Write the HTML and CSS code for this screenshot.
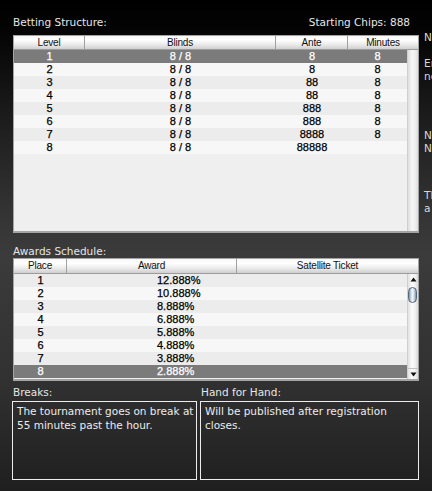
FILE: index.html
```html
<!DOCTYPE html>
<html>
<head>
<meta charset="utf-8">
<link rel="stylesheet" href="styles.css">
</head>
<body>
<div class="page">
  <div class="main">
    <div class="toprow">
      <span class="label">Betting Structure:</span>
      <span class="label chips">Starting Chips: 888</span>
    </div>
    <div class="tbl tbl1">
      <div class="head">
        <div class="hc c1">Level</div>
        <div class="hc c2">Blinds</div>
        <div class="hc c3">Ante</div>
        <div class="hc c4h last">Minutes</div>
      </div>
      <div class="bodywrap">
        <div class="rows">
          <div class="row sel"><span class="c1">1</span><span class="c2">8 / 8</span><span class="c3">8</span><span class="c4">8</span></div>
          <div class="row even"><span class="c1">2</span><span class="c2">8 / 8</span><span class="c3">8</span><span class="c4">8</span></div>
          <div class="row odd"><span class="c1">3</span><span class="c2">8 / 8</span><span class="c3">88</span><span class="c4">8</span></div>
          <div class="row even"><span class="c1">4</span><span class="c2">8 / 8</span><span class="c3">88</span><span class="c4">8</span></div>
          <div class="row odd"><span class="c1">5</span><span class="c2">8 / 8</span><span class="c3">888</span><span class="c4">8</span></div>
          <div class="row even"><span class="c1">6</span><span class="c2">8 / 8</span><span class="c3">888</span><span class="c4">8</span></div>
          <div class="row odd"><span class="c1">7</span><span class="c2">8 / 8</span><span class="c3">8888</span><span class="c4">8</span></div>
          <div class="row even"><span class="c1">8</span><span class="c2">8 / 8</span><span class="c3">88888</span><span class="c4"></span></div>
          <div class="filler"></div>
        </div>
        <div class="track"></div>
      </div>
    </div>

    <div class="label2"><span class="label">Awards Schedule:</span></div>

    <div class="tbl tbl2">
      <div class="head">
        <div class="hc p1">Place</div>
        <div class="hc p2">Award</div>
        <div class="hc p3h last">Satellite Ticket</div>
      </div>
      <div class="bodywrap">
        <div class="rows">
          <div class="row odd"><span class="p1">1</span><span class="p2">12.888%</span><span class="p3"></span></div>
          <div class="row even"><span class="p1">2</span><span class="p2">10.888%</span><span class="p3"></span></div>
          <div class="row odd"><span class="p1">3</span><span class="p2">8.888%</span><span class="p3"></span></div>
          <div class="row even"><span class="p1">4</span><span class="p2">6.888%</span><span class="p3"></span></div>
          <div class="row odd"><span class="p1">5</span><span class="p2">5.888%</span><span class="p3"></span></div>
          <div class="row even"><span class="p1">6</span><span class="p2">4.888%</span><span class="p3"></span></div>
          <div class="row odd"><span class="p1">7</span><span class="p2">3.888%</span><span class="p3"></span></div>
          <div class="row sel"><span class="p1">8</span><span class="p2">2.888%</span><span class="p3"></span></div>
        </div>
        <div class="scroll">
          <div class="arrow up"><svg width="7" height="5" viewBox="0 0 7 5"><path d="M3.5 0.5 L6.5 4.5 L0.5 4.5 Z" fill="#111"/></svg></div>
          <div class="thumb"></div>
          <div class="strack"></div>
          <div class="arrow down"><svg width="7" height="5" viewBox="0 0 7 5"><path d="M0.5 0.5 L6.5 0.5 L3.5 4.5 Z" fill="#111"/></svg></div>
        </div>
      </div>
    </div>

    <div class="label3">
      <span class="label lb1">Breaks:</span>
      <span class="label lb2">Hand for Hand:</span>
    </div>
    <div class="boxes">
      <div class="box box1">The tournament goes on break at<br>55 minutes past the hour.</div>
      <div class="box box2">Will be published after registration<br>closes.</div>
    </div>
  </div>

  <div class="side">
    <div class="sp s1">No Limit Texas Hold'em</div>
    <div class="sp s2">Entry fee: 8 + 8 chips, prizes<br>net of fees</div>
    <div class="sp s3">No rebuys.<br>No add-ons.</div>
    <div class="sp s4">The tournament runs until<br>a winner is determined.</div>
  </div>
</div>
</body>
</html>
```

FILE: styles.css
```css
html, body {
  margin: 0;
  padding: 0;
}
body {
  width: 432px;
  height: 491px;
  overflow: hidden;
  background: linear-gradient(to bottom, #000 0px, #040404 30px, #1a1a1a 110px, #333 210px, #3b3b3b 255px, #313131 380px, #1f1f1f 491px);
  font-family: "DejaVu Sans", sans-serif;
}
.page {
  display: flex;
  padding-left: 13px;
  width: 700px;
}
.main {
  width: 406px;
  flex: none;
  display: flex;
  flex-direction: column;
}
.label {
  font-size: 10.5px;
  color: #e6e6e6;
  line-height: 16px;
  white-space: nowrap;
}
.toprow {
  height: 21px;
  padding-top: 14px;
  display: flex;
  justify-content: space-between;
  padding-right: 9px;
}
.tbl {
  background: #efefef;
  border-style: solid;
  border-color: #a4a4a4;
  border-width: 1px 1px 2px 1px;
  display: flex;
  flex-direction: column;
  font-family: "Liberation Sans", Arial, sans-serif;
}
.tbl1 { height: 195px; }
.tbl2 { height: 120px; }
.head {
  display: flex;
  height: 13px;
  background: linear-gradient(to bottom, #f8f8f8 0%, #ffffff 30%, #e8e8e8 70%, #cfcfcf 100%);
  border-bottom: 1px solid #9c9c9c;
  flex: none;
}
.tbl2 .head { height: 14px; }
.hc {
  box-sizing: border-box;
  font-size: 10px;
  line-height: 13px;
  color: #111;
  text-align: center;
  border-right: 1px solid #a0a0a0;
  letter-spacing: -0.2px;
}
.tbl2 .hc { line-height: 14px; }
.hc.last { border-right: none; }
.bodywrap {
  display: flex;
  flex: 1;
  min-height: 0;
}
.rows {
  width: 393px;
  display: flex;
  flex-direction: column;
}
.row {
  display: flex;
  height: 13px;
  font-size: 11px;
  line-height: 13px;
  color: #000;
  flex: none;
  -webkit-text-stroke: 0.25px currentColor;
}
.row span { text-align: center; display: block; }
.row.odd { background: #ececec; }
.row.even { background: #f7f7f7; }
.row.sel { background: #7b7b7b; color: #fff; }
.filler { flex: 1; background: #efefef; }
.c1 { width: 71px; }
.c2 { width: 191px; }
.c3 { width: 72px; }
.c4 { width: 59px; }
.c4h { width: 70px; }
.p1 { width: 53px; }
.p2 { width: 170px; }
.row .p2 { text-align: left; padding-left: 90px; box-sizing: border-box; }
.p3 { width: 170px; }
.p3h { width: 181px; }
.track {
  width: 11px;
  background: linear-gradient(to right, #dedede, #f6f6f6 40%, #efefef 70%, #dcdcdc);
  border-left: 1px solid #cfcfcf;
  box-sizing: border-box;
}
.scroll {
  width: 11px;
  display: flex;
  flex-direction: column;
  background: linear-gradient(to right, #e2e2e2, #fbfbfb 40%, #f2f2f2 70%, #d8d8d8);
  border-left: 1px solid #cfcfcf;
  box-sizing: border-box;
}
.arrow {
  height: 11px;
  display: flex;
  align-items: center;
  justify-content: center;
  flex: none;
}
.arrow svg { display: block; }
.arrow.down { border-top: 1px solid #c4c4c4; height: 10px; }
.thumb {
  margin: 2px 0 0 0;
  height: 16px;
  width: 9px;
  box-sizing: border-box;
  border: 1px solid #56687c;
  border-radius: 5px;
  background: linear-gradient(to right, #7f92a6, #dbe4ee 35%, #f2f6fa 55%, #b9c7d5 80%, #7a8ea3);
  flex: none;
}
.strack { flex: 1; }
.label2 {
  height: 18px;
  padding-top: 7px;
}
.label3 {
  height: 17px;
  padding-top: 3px;
  display: flex;
}
.lb1 { width: 188px; }
.boxes {
  display: flex;
  gap: 3px;
  margin-left: -1px;
}
.box {
  box-sizing: border-box;
  height: 79px;
  border: 1px solid #ececec;
  color: #ececec;
  font-size: 10.5px;
  line-height: 14px;
  padding: 2px 0 0 4px;
  white-space: nowrap;
  overflow: hidden;
}
.box1 { width: 185px; }
.box2 { width: 219px; }
.side {
  margin-left: 5px;
  width: 250px;
  flex: none;
  padding-top: 31px;
  color: #d8d8d8;
  font-size: 10.5px;
  line-height: 13px;
  white-space: nowrap;
}
.s2 { margin-top: 13px; }
.s3 { margin-top: 46px; }
.s4 { margin-top: 34px; }
```
